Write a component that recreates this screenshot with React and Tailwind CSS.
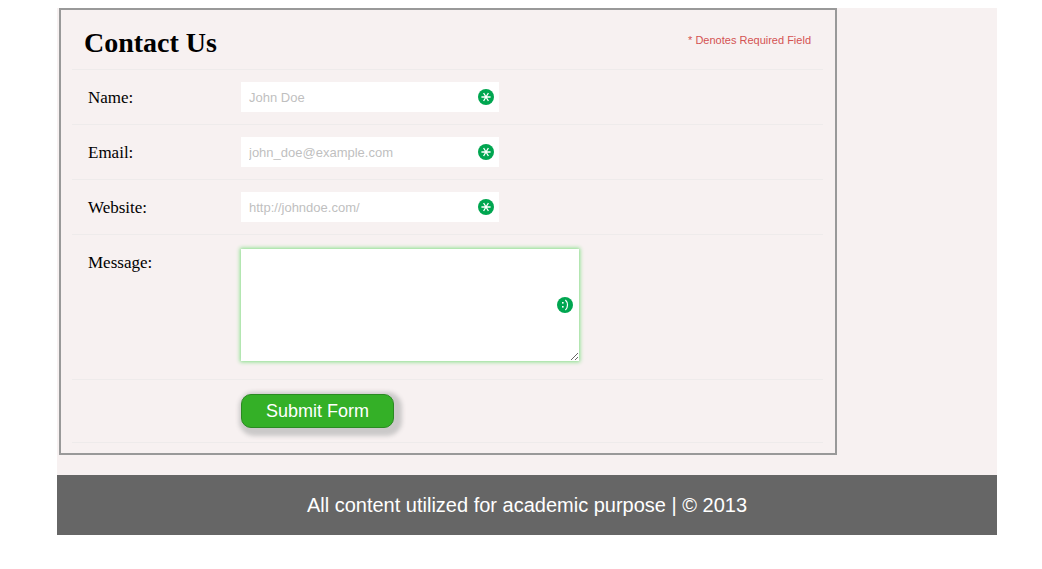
import React from "react";

function RequiredIcon() {
  return (
    <svg viewBox="0 0 16 16" className="pointer-events-none absolute right-[5px] top-1/2 size-4 -translate-y-1/2" aria-hidden="true">
      <circle cx="8" cy="8" r="8" fill="#00a650" />
      <path d="M3.4 8H12.6M5.6 4L10.4 12M10.4 4L5.6 12" stroke="#fff" strokeWidth="1.3" fill="none" />
    </svg>
  );
}

function SmileIcon() {
  return (
    <svg viewBox="0 0 16 16" className="pointer-events-none size-4" aria-hidden="true">
      <circle cx="8" cy="8" r="8" fill="#00a650" />
      <rect x="5" y="5" width="1.6" height="1.6" fill="#fff" />
      <rect x="5" y="9" width="1.6" height="1.6" fill="#fff" />
      <path d="M8.4 3C11.2 5.6 11.2 10.4 8.4 13" stroke="#fff" strokeWidth="1.2" fill="none" />
    </svg>
  );
}

const label = "w-[153px] shrink-0 pt-1 font-[Georgia,'Liberation_Serif',serif] text-[17px] leading-6 text-black";

function TextRow({ id, text, type, placeholder }) {
  return (
    <li className="flex border-b border-[#eeebeb] py-3 pl-4">
      <label htmlFor={id} className={label}>{text}</label>
      <div className="relative w-[258px]">
        <input
          id={id}
          type={type}
          required
          placeholder={placeholder}
          className="block h-[30px] w-full bg-white pl-2 pr-7 text-[13px] text-black shadow-none outline-none placeholder:text-[#bfbfbf]"
        />
        <RequiredIcon />
      </div>
    </li>
  );
}

export default function App() {
  return (
    <div className="bg-white pb-8 pl-[57px] pr-[45px] pt-2 font-['Liberation_Sans',Arial,sans-serif]">
      <div className="max-w-[940px] bg-[#f7f1f1]">
        <main className="px-0.5 pb-5">
          <form className="max-w-[778px] border-2 border-[#999] pb-2.5 pl-[11px] pr-3" onSubmit={(e) => e.preventDefault()}>
            <ul>
              <li className="flex h-[60px] items-center justify-between border-b border-[#eeebeb] px-3">
                <h2 className="pt-1.5 font-[Georgia,'Liberation_Serif',serif] text-[28px] font-bold leading-8 text-black">Contact Us</h2>
                <span className="text-[11px] leading-4 text-[#d45252]">* Denotes Required Field</span>
              </li>
              <TextRow id="name" text="Name:" type="text" placeholder="John Doe" />
              <TextRow id="email" text="Email:" type="email" placeholder="john_doe@example.com" />
              <TextRow id="website" text="Website:" type="url" placeholder="http://johndoe.com/" />
              <li className="flex border-b border-[#eeebeb] pb-[18px] pl-4 pt-3">
                <label htmlFor="message" className={label}>Message:</label>
                <div className="relative w-[338px] pt-0.5">
                  <textarea
                    id="message"
                    className="block h-[112px] w-full resize bg-white p-2 pr-8 text-[13px] shadow-[0_0_4px_1px_#85df87] outline-none"
                  />
                  <div className="pointer-events-none absolute inset-y-0 right-1.5 flex items-center pt-0.5">
                    <SmileIcon />
                  </div>
                </div>
              </li>
              <li className="flex border-b border-[#eeebeb] py-3.5 pl-[169px]">
                <button
                  type="submit"
                  className="h-[34px] w-[153px] rounded-[10px] border border-[#2a8a22] bg-[#34b027] text-lg leading-6 text-white shadow-[3px_3px_4px_5px_#cbc9c9]"
                >
                  Submit Form
                </button>
              </li>
            </ul>
          </form>
        </main>
        <footer className="bg-[#666] py-4 text-center text-xl leading-7 text-white">
          All content utilized for academic purpose | © 2013
        </footer>
      </div>
    </div>
  );
}
